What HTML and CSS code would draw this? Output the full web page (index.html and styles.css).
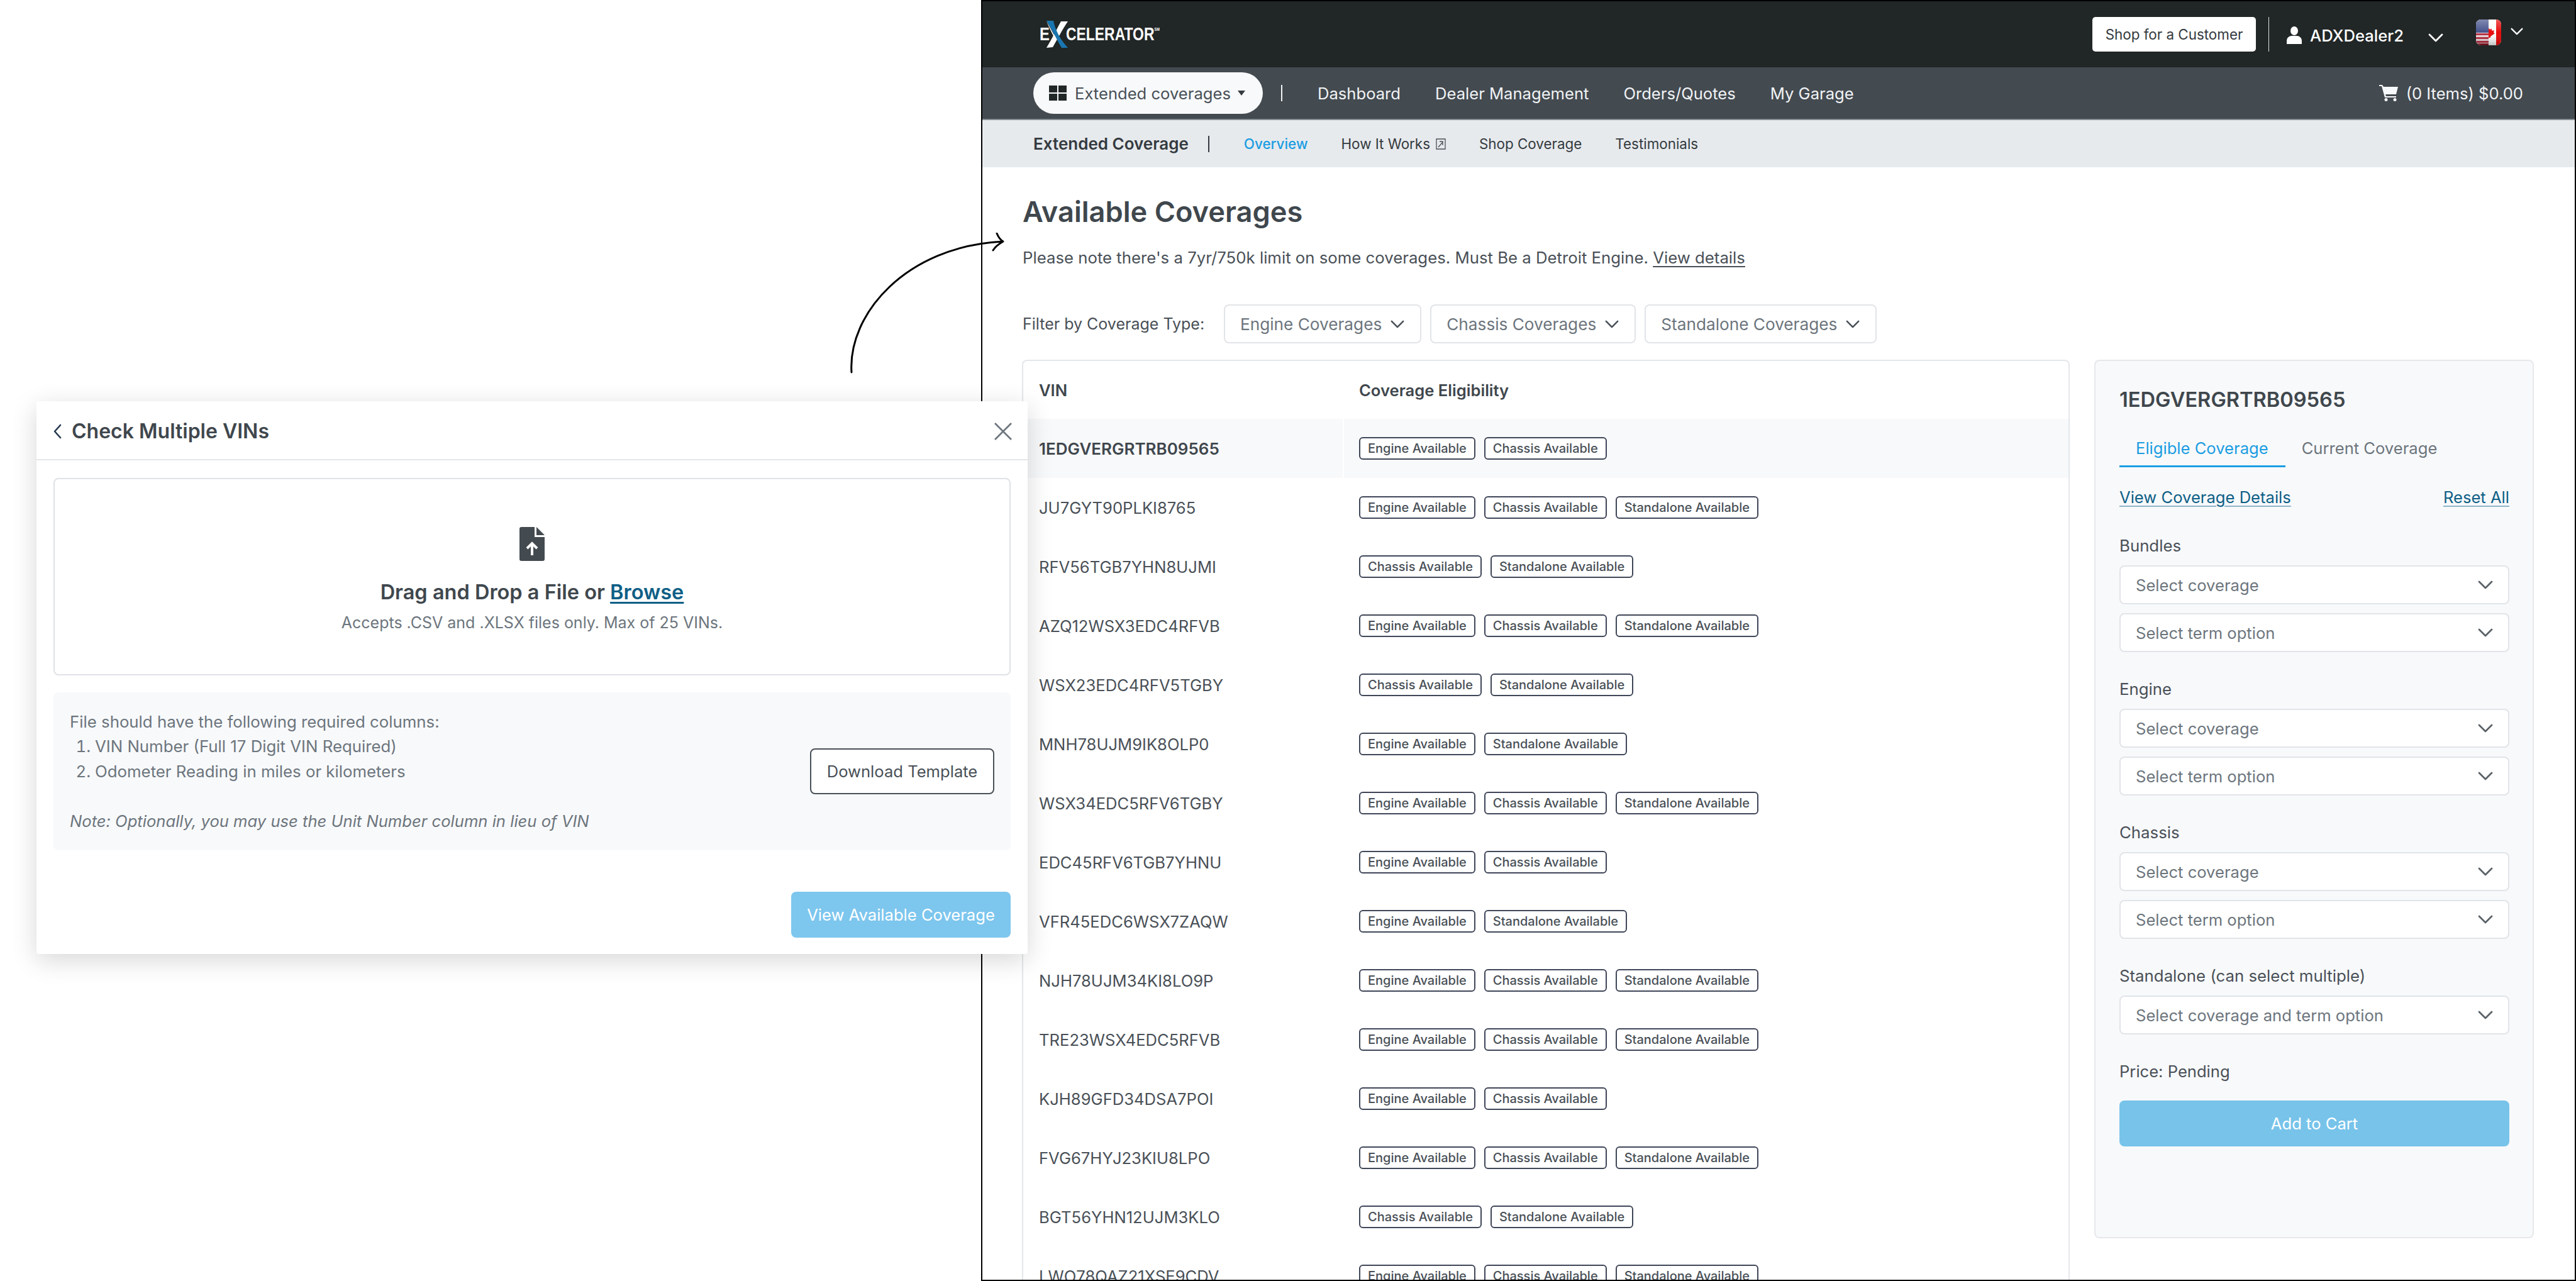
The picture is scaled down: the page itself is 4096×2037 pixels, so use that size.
FILE: index.html
```html
<!DOCTYPE html>
<html lang="en">
<head>
<meta charset="utf-8">
<title>Available Coverages</title>
<link rel="stylesheet" href="styles.css">
</head>
<body>
<svg class="sprite" width="0" height="0" aria-hidden="true">
  <symbol id="chev" viewBox="0 0 24 14"><path d="M2 2l10 10L22 2" fill="none" stroke="currentColor" stroke-width="2.8" stroke-linecap="round" stroke-linejoin="round"/></symbol>
</svg>
<div class="canvas">
  <section class="window">
    <header class="topbar">
      <div class="logo">
        <span class="logo-e">E</span>
        <svg class="logo-x" viewBox="0 0 35 43" aria-hidden="true">
          <path d="M35 1H24C18 12 10 28 1 43l10-1C18 30 26 14 35 1Z" fill="#fff"/>
          <path d="M1 0h11c3 15 11 30 23 43H25C18 31 9 13 1 0Z" fill="#1a76b0"/>
          <path d="M1 1c5 8 9 16 14 25l-1 2C9 19 5 10 1 1Z" fill="#fff"/>
        </svg>
        <span class="logo-rest">CELERATOR<sup>SM</sup></span>
      </div>
      <div class="top-right">
        <button class="shop-btn">Shop for a Customer</button>
        <span class="top-divider"></span>
        <svg class="person" viewBox="0 0 24 28" aria-hidden="true"><ellipse cx="12" cy="7" rx="6" ry="7" fill="#fff"/><path d="M0 28v-5c0-5 4-8 8-8h8c4 0 8 3 8 8v5Z" fill="#fff"/></svg>
        <span class="user-name">ADXDealer2</span>
        <svg class="top-chev"><use href="#chev"/></svg>
        <svg class="flag" viewBox="0 0 40 41" aria-hidden="true">
          <defs>
            <clipPath id="flagclip"><rect width="40" height="41" rx="8"/></clipPath>
            <linearGradient id="gloss" x1="0" y1="0" x2="0" y2="1"><stop offset="0" stop-color="#fff" stop-opacity=".35"/><stop offset=".5" stop-color="#fff" stop-opacity=".05"/><stop offset="1" stop-color="#000" stop-opacity=".25"/></linearGradient>
          </defs>
          <g clip-path="url(#flagclip)">
            <rect width="40" height="41" fill="#fff"/>
            <rect width="20" height="41" fill="#e9d9dc"/>
            <rect y="22" width="20" height="3" fill="#b52538"/>
            <rect y="28" width="20" height="3" fill="#b52538"/>
            <rect y="34" width="20" height="3" fill="#b52538"/>
            <rect y="38" width="20" height="3" fill="#8e1526"/>
            <rect width="20" height="21" fill="#3c4a86"/>
            <rect x="32" width="8" height="41" fill="#e60000"/>
            <path d="M20 14l3 2 1-2 2 4 3-1-1 4 2 1-7 5v2h-3Z" fill="#e60000"/>
            <rect width="40" height="41" fill="url(#gloss)"/>
          </g>
        </svg>
        <svg class="flag-chev"><use href="#chev"/></svg>
      </div>
    </header>

    <nav class="mainnav">
      <button class="pill">
        <svg class="grid-ico" viewBox="0 0 28 24" aria-hidden="true"><path d="M0 0h13v11H0zM15 0h13v11H15zM0 13h13v11H0zM15 13h13v11H15z" fill="#212626"/></svg>
        <span>Extended coverages</span>
        <span class="caret"></span>
      </button>
      <span class="nav-divider"></span>
      <a class="nav-link nav-first">Dashboard</a>
      <a class="nav-link">Dealer Management</a>
      <a class="nav-link">Orders/Quotes</a>
      <a class="nav-link">My Garage</a>
      <div class="cart">
        <svg class="cart-ico" viewBox="0 0 30 26" aria-hidden="true"><path d="M0 0h5l2 3h23l-3 12H10l1 3h16v2H9L4 2H0Z" fill="#f8f9fb"/><circle cx="11" cy="23.5" r="2.5" fill="#f8f9fb"/><circle cx="25" cy="23.5" r="2.5" fill="#f8f9fb"/></svg>
        <span>(0 Items) $0.00</span>
      </div>
    </nav>

    <nav class="subnav">
      <strong class="sub-title">Extended Coverage</strong>
      <span class="sub-divider"></span>
      <a class="sub-link sub-active">Overview</a>
      <a class="sub-link sub-ext">How It Works
        <svg class="ext-ico" viewBox="0 0 16 18" aria-hidden="true"><path d="M1 1h14v16H1z" fill="none" stroke="#495057" stroke-width="1.3"/><path d="M4 14l7-8M6 5h5v6" fill="none" stroke="#495057" stroke-width="1.3"/></svg>
      </a>
      <a class="sub-link">Shop Coverage</a>
      <a class="sub-link">Testimonials</a>
    </nav>

    <main class="content">
      <h1 class="page-title">Available Coverages</h1>
      <p class="page-note">Please note there's a 7yr/750k limit on some coverages. Must Be a Detroit Engine. <a class="note-link">View details</a></p>
      <div class="filters">
        <span class="filter-label">Filter by Coverage Type:</span>
        <button class="filter-btn">Engine Coverages <svg class="filter-chev"><use href="#chev"/></svg></button>
        <button class="filter-btn">Chassis Coverages <svg class="filter-chev"><use href="#chev"/></svg></button>
        <button class="filter-btn">Standalone Coverages <svg class="filter-chev"><use href="#chev"/></svg></button>
      </div>
      <div class="columns">
        <div class="table-card">
          <div class="row row-head"><div class="cell-vin">VIN</div><div class="cell-cov">Coverage Eligibility</div></div>
          <div class="row row-selected"><div class="cell-vin">1EDGVERGRTRB09565</div><div class="cell-cov"><span class="badge">Engine Available</span><span class="badge">Chassis Available</span></div></div>
          <div class="row"><div class="cell-vin">JU7GYT90PLKI8765</div><div class="cell-cov"><span class="badge">Engine Available</span><span class="badge">Chassis Available</span><span class="badge">Standalone Available</span></div></div>
          <div class="row"><div class="cell-vin">RFV56TGB7YHN8UJMI</div><div class="cell-cov"><span class="badge">Chassis Available</span><span class="badge">Standalone Available</span></div></div>
          <div class="row"><div class="cell-vin">AZQ12WSX3EDC4RFVB</div><div class="cell-cov"><span class="badge">Engine Available</span><span class="badge">Chassis Available</span><span class="badge">Standalone Available</span></div></div>
          <div class="row"><div class="cell-vin">WSX23EDC4RFV5TGBY</div><div class="cell-cov"><span class="badge">Chassis Available</span><span class="badge">Standalone Available</span></div></div>
          <div class="row"><div class="cell-vin">MNH78UJM9IK8OLP0</div><div class="cell-cov"><span class="badge">Engine Available</span><span class="badge">Standalone Available</span></div></div>
          <div class="row"><div class="cell-vin">WSX34EDC5RFV6TGBY</div><div class="cell-cov"><span class="badge">Engine Available</span><span class="badge">Chassis Available</span><span class="badge">Standalone Available</span></div></div>
          <div class="row"><div class="cell-vin">EDC45RFV6TGB7YHNU</div><div class="cell-cov"><span class="badge">Engine Available</span><span class="badge">Chassis Available</span></div></div>
          <div class="row"><div class="cell-vin">VFR45EDC6WSX7ZAQW</div><div class="cell-cov"><span class="badge">Engine Available</span><span class="badge">Standalone Available</span></div></div>
          <div class="row"><div class="cell-vin">NJH78UJM34KI8LO9P</div><div class="cell-cov"><span class="badge">Engine Available</span><span class="badge">Chassis Available</span><span class="badge">Standalone Available</span></div></div>
          <div class="row"><div class="cell-vin">TRE23WSX4EDC5RFVB</div><div class="cell-cov"><span class="badge">Engine Available</span><span class="badge">Chassis Available</span><span class="badge">Standalone Available</span></div></div>
          <div class="row"><div class="cell-vin">KJH89GFD34DSA7POI</div><div class="cell-cov"><span class="badge">Engine Available</span><span class="badge">Chassis Available</span></div></div>
          <div class="row"><div class="cell-vin">FVG67HYJ23KIU8LPO</div><div class="cell-cov"><span class="badge">Engine Available</span><span class="badge">Chassis Available</span><span class="badge">Standalone Available</span></div></div>
          <div class="row"><div class="cell-vin">BGT56YHN12UJM3KLO</div><div class="cell-cov"><span class="badge">Chassis Available</span><span class="badge">Standalone Available</span></div></div>
          <div class="row"><div class="cell-vin">LWO78QAZ21XSE9CDV</div><div class="cell-cov"><span class="badge">Engine Available</span><span class="badge">Chassis Available</span><span class="badge">Standalone Available</span></div></div>
        </div>

        <aside class="panel">
          <h2 class="panel-title">1EDGVERGRTRB09565</h2>
          <div class="tabs"><a class="tab tab-active">Eligible Coverage</a><a class="tab">Current Coverage</a></div>
          <div class="panel-links"><a class="panel-link">View Coverage Details</a><a class="panel-link">Reset All</a></div>
          <div class="group">
            <div class="group-label">Bundles</div>
            <div class="select"><span>Select coverage</span><svg class="select-chev"><use href="#chev"/></svg></div>
            <div class="select"><span>Select term option</span><svg class="select-chev"><use href="#chev"/></svg></div>
          </div>
          <div class="group">
            <div class="group-label">Engine</div>
            <div class="select"><span>Select coverage</span><svg class="select-chev"><use href="#chev"/></svg></div>
            <div class="select"><span>Select term option</span><svg class="select-chev"><use href="#chev"/></svg></div>
          </div>
          <div class="group">
            <div class="group-label">Chassis</div>
            <div class="select"><span>Select coverage</span><svg class="select-chev"><use href="#chev"/></svg></div>
            <div class="select"><span>Select term option</span><svg class="select-chev"><use href="#chev"/></svg></div>
          </div>
          <div class="group">
            <div class="group-label">Standalone (can select multiple)</div>
            <div class="select"><span>Select coverage and term option</span><svg class="select-chev"><use href="#chev"/></svg></div>
          </div>
          <div class="price">Price: Pending</div>
          <button class="cart-btn">Add to Cart</button>
        </aside>
      </div>
    </main>
  </section>

  <svg class="arrow" viewBox="0 0 260 230" aria-hidden="true">
    <path d="M14 222C8 130 100 22 254 14" fill="none" stroke="#000" stroke-width="3" stroke-linecap="round"/>
    <path d="M245 1c2 5 5 10 10 13-7 4-13 9-16 14" fill="none" stroke="#000" stroke-width="3" stroke-linecap="round" stroke-linejoin="round"/>
  </svg>

  <section class="modal">
    <header class="modal-head">
      <svg class="back-ico" viewBox="0 0 14 24" aria-hidden="true"><path d="M12 2L3 12l9 10" fill="none" stroke="#24384f" stroke-width="2.6" stroke-linecap="round" stroke-linejoin="round"/></svg>
      <h2 class="modal-title">Check Multiple VINs</h2>
      <svg class="close-ico" viewBox="0 0 28 28" aria-hidden="true"><path d="M1 1l26 26M27 1L1 27" fill="none" stroke="#6c757d" stroke-width="2.6"/></svg>
    </header>
    <div class="modal-body">
      <div class="dropzone">
        <svg class="file-ico" viewBox="0 0 40 54" aria-hidden="true">
          <path d="M3 0h21v16h16v35a3 3 0 0 1-3 3H3a3 3 0 0 1-3-3V3a3 3 0 0 1 3-3Z" fill="#434a50"/>
          <path d="M27 0l13 13H27Z" fill="#434a50"/>
          <path d="M20 45V27M12 34l8-8 8 8" fill="none" stroke="#fff" stroke-width="4"/>
        </svg>
        <div class="drop-title">Drag and Drop a File or <a class="browse">Browse</a></div>
        <div class="drop-sub">Accepts .CSV and .XLSX files only. Max of 25 VINs.</div>
      </div>
      <div class="info">
        <div class="info-text">
          <div>File should have the following required columns:</div>
          <ol class="info-list">
            <li>VIN Number (Full 17 Digit VIN Required)</li>
            <li>Odometer Reading in miles or kilometers</li>
          </ol>
          <div class="info-note">Note: Optionally, you may use the Unit Number column in lieu of VIN</div>
        </div>
        <button class="download-btn">Download Template</button>
      </div>
      <div class="modal-foot"><button class="view-btn">View Available Coverage</button></div>
    </div>
  </section>
</div>
</body>
</html>
```

FILE: styles.css
```css
* { box-sizing: border-box; }
html, body { margin: 0; padding: 0; background: #fff; }
body { font-family: "Inter", "Liberation Sans", sans-serif; color: #495057; overflow: hidden; }
button { font-family: inherit; cursor: default; }
a { color: inherit; }
h1, h2, p, ol { margin: 0; padding: 0; }
.sprite { position: absolute; }

.canvas { position: relative; width: 4096px; height: 2037px; overflow: hidden; }

/* app window on the free canvas */
.window { position: absolute; left: 1560px; top: 0; width: 2536px; height: 2037px; border: 2px solid #000; overflow: hidden; display: flex; flex-direction: column; background: #fff; }

/* top bar */
.topbar { flex: none; height: 105px; background: #212626; display: flex; align-items: center; padding-left: 91px; padding-right: 82px; }
.logo { display: flex; align-items: center; color: #fff; font-family: "Liberation Sans", sans-serif; font-weight: 700; font-size: 29px; line-height: 1; height: 44px; }
.logo-e { width: 19px; display: inline-block; transform: scaleX(.82); transform-origin: left center; }
.logo-x { width: 35px; height: 43px; flex: none; margin-left: -9px; }
.logo-rest { display: inline-block; width: 150px; white-space: nowrap; margin-left: -3px; transform: scaleX(.79); transform-origin: left center; }
.logo-rest sup { font-size: 7px; vertical-align: 15px; line-height: 0; }
.top-right { margin-left: auto; display: flex; align-items: center; }
.shop-btn { width: 260px; height: 55px; background: #fff; border: 0; border-radius: 5px; font-size: 22.4px; color: #343a40; padding: 0; }
.top-divider { width: 1px; height: 55px; background: #dfe2e6; margin-left: 20px; margin-right: 28px; }
.person { width: 24px; height: 28px; flex: none; margin-right: 13px; margin-top: 3px; }
.user-name { color: #fff; font-size: 25.6px; font-weight: 500; width: 188px; padding-top: 3px; white-space: nowrap; }
.top-chev { width: 24px; height: 14px; color: #fff; margin-top: 10px; }
.flag { width: 40px; height: 41px; margin-left: 52px; flex: none; margin-top: -6px; }
.flag-chev { width: 20px; height: 12px; color: #fff; margin-left: 15px; margin-top: -10px; }

/* main nav */
.mainnav { flex: none; height: 84px; background: #434a50; border-bottom: 2px solid #868e96; display: flex; align-items: center; padding-left: 81px; padding-right: 82px; color: #f1f3f5; font-size: 25.6px; }
.pill { width: 365px; height: 66px; background: #f8f9fb; border: 0; border-radius: 33px; display: flex; align-items: center; padding: 0 0 0 25px; color: #495057; font-size: 25.6px; flex: none; }
.grid-ico { width: 28px; height: 24px; margin-right: 13px; flex: none; }
.caret { width: 0; height: 0; border-left: 6px solid transparent; border-right: 6px solid transparent; border-top: 8px solid #343a40; margin-left: 11px; }
.nav-divider { width: 2px; height: 26px; background: #f1f3f5; margin-left: 29px; }
.nav-link { margin-left: 55px; white-space: nowrap; }
.nav-first { margin-left: 56px; }
.cart { margin-left: auto; display: flex; align-items: center; gap: 13px; }
.cart-ico { width: 30px; height: 26px; }

/* sub nav */
.subnav { flex: none; height: 75px; background: #e7eaed; display: flex; align-items: center; padding-left: 81px; font-size: 22.4px; color: #343a40; }
.sub-title { font-size: 26px; font-weight: 600; color: #343a40; white-space: nowrap; }
.sub-divider { width: 2px; height: 26px; background: #343a40; margin-left: 31px; margin-right: 55px; }
.sub-link { margin-right: 53px; display: flex; align-items: center; gap: 9px; white-space: nowrap; }
.sub-active { color: #1b9de2; font-weight: 500; }
.ext-ico { width: 16px; height: 18px; }

/* content */
.content { flex: 1; padding: 41px 0 0 64px; min-height: 0; }
.page-title { font-size: 45.2px; line-height: 60px; font-weight: 600; color: #3f474d; }
.page-note { margin-top: 25px; font-size: 25.75px; line-height: 36px; color: #495057; }
.note-link { text-decoration: underline; text-underline-offset: 4px; }
.filters { margin-top: 56px; display: flex; align-items: center; height: 62px; }
.filter-label { font-size: 25px; color: #495057; width: 320px; flex: none; white-space: nowrap; }
.filter-btn { height: 62px; background: #fff; border: 2px solid #e1e4e8; border-radius: 8px; display: flex; align-items: center; gap: 14px; padding: 0 25px 0 24px; font-size: 26.2px; color: #6c757d; margin-right: 14px; white-space: nowrap; }
.filter-chev { width: 22px; height: 13px; color: #495057; flex: none; }
.columns { margin-top: 26px; display: flex; align-items: flex-start; gap: 39px; margin-left: -1px; }

/* table */
.table-card { width: 1666px; flex: none; border: 2px solid #e4e7ea; border-bottom: 0; border-radius: 8px 8px 0 0; }
.row { display: grid; grid-template-columns: 508px 1fr; height: 94px; align-items: stretch; }
.row-head { height: 92px; font-weight: 600; color: #3f474d; }
.row-selected { background: #f8f9fb; }
.row-selected .cell-vin { font-weight: 600; font-size: 26px; color: #3f474d; }
.row-selected .cell-cov { border-left-color: #fff; }
.cell-vin { display: flex; align-items: center; padding-left: 25px; font-size: 25.6px; }
.row-head .cell-cov { font-size: 25.6px; }
.cell-cov { display: flex; align-items: center; gap: 14px; padding-left: 24px; border-left: 2px solid transparent; }
.badge { height: 36px; display: inline-flex; align-items: center; padding: 0 12px; border: 2px solid #3f4658; border-radius: 6px; font-size: 20px; font-weight: 500; color: #495057; background: #fff; white-space: nowrap; }

/* side panel */
.panel { width: 699px; height: 1397px; flex: none; background: #f8f9fb; border: 2px solid #e6e8eb; border-radius: 8px; padding: 41px 37px 0 38px; }
.panel-title { font-size: 32.6px; line-height: 40px; font-weight: 600; color: #3f474d; }
.tabs { margin-top: 40px; display: flex; }
.tab { padding: 0 27px 9px 26px; line-height: 36px; font-size: 25.6px; color: #6c757d; border-bottom: 3px solid transparent; white-space: nowrap; }
.tab-active { color: #1b9de2; border-bottom-color: #1b9de2; }
.panel-links { margin-top: 32px; display: flex; justify-content: space-between; line-height: 32px; font-size: 25.6px; color: #0e5f86; }
.panel-link { text-decoration: underline; text-decoration-color: #8fb5c9; text-underline-offset: 4px; }
.group { margin-top: 43px; }
.panel-links + .group { margin-top: 45px; }
.group-label { font-size: 25.8px; line-height: 32px; color: #495057; margin-bottom: 15px; }
.select { height: 62px; background: #fff; border: 2px solid #e1e4e8; border-radius: 8px; display: flex; align-items: center; justify-content: space-between; padding: 0 24px 0 24px; font-size: 25.6px; color: #6c757d; }
.select + .select { margin-top: 14px; }
.select-chev { width: 24px; height: 14px; color: #5a6268; flex: none; }
.price { margin-top: 43px; font-size: 25.6px; line-height: 32px; color: #495057; }
.cart-btn { margin-top: 30px; width: 100%; height: 73px; background: #77c3ea; color: #fff; font-size: 25.6px; border: 0; border-radius: 8px; }

/* arrow annotation */
.arrow { position: absolute; left: 1340px; top: 370px; width: 260px; height: 230px; }

/* modal */
.modal { position: absolute; left: 58px; top: 638px; width: 1576px; height: 879px; background: #fff; border-radius: 4px; box-shadow: 0 10px 40px rgba(0,0,0,.16); display: flex; flex-direction: column; }
.modal-head { flex: none; height: 94px; border-bottom: 2px solid #e4e7ea; display: flex; align-items: center; padding: 3px 25px 0 26px; }
.back-ico { width: 14px; height: 24px; flex: none; margin-right: 16px; }
.modal-title { font-size: 32px; font-weight: 600; color: #3f474d; }
.close-ico { width: 28px; height: 28px; margin-left: auto; }
.modal-body { flex: 1; padding: 28px 27px 0; }
.dropzone { height: 314px; border: 2px solid #dfe2e6; border-radius: 8px; display: flex; flex-direction: column; align-items: center; padding-top: 76px; }
.file-ico { width: 40px; height: 54px; flex: none; }
.drop-title { margin-top: 28px; font-size: 32.5px; line-height: 44px; font-weight: 600; color: #3f474d; }
.browse { color: #0e5f86; text-decoration: underline; text-underline-offset: 4px; }
.drop-sub { margin-top: 8px; font-size: 25px; line-height: 36px; color: #6c757d; }
.info { margin-top: 27px; height: 251px; background: #f8f9fb; border-radius: 8px; display: flex; align-items: center; justify-content: space-between; padding: 0 26px; }
.info-text { font-size: 25.8px; line-height: 39.5px; color: #6c757d; }
.info-list { padding-left: 40px; }
.info-note { margin-top: 39.5px; font-style: italic; font-size: 25.6px; }
.download-btn { width: 293px; height: 73px; background: #fff; border: 2px solid #495057; border-radius: 8px; font-size: 25.6px; color: #495057; padding: 0; }
.modal-foot { margin-top: 66px; display: flex; justify-content: flex-end; }
.view-btn { width: 349px; height: 73px; background: #7dc6ee; color: #fff; border: 0; border-radius: 8px; font-size: 25.6px; padding: 0; }
```
